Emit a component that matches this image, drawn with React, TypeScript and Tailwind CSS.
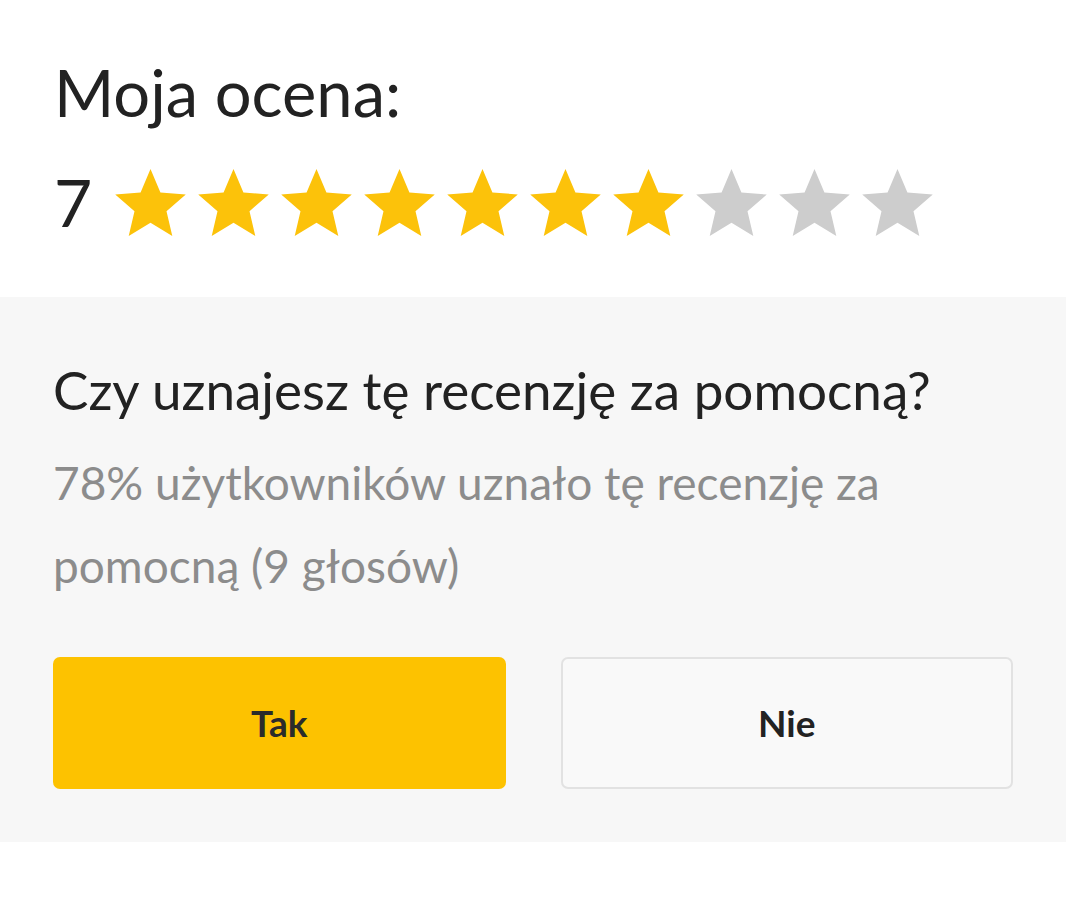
import React from 'react';

const font = { fontFamily: 'Lato, "Noto Sans", sans-serif' };

function Star({ filled }: { filled: boolean }) {
  return (
    <svg
      viewBox="2 2 20 19"
      width={71}
      height={67}
      className={filled ? 'text-[#fcc20a]' : 'text-[#cdcdcd]'}
      fill="currentColor"
    >
      <path d="M12 17.27L18.18 21l-1.64-7.03L22 9.24l-7.19-.61L12 2 9.19 8.63 2 9.24l5.46 4.73L5.82 21z" />
    </svg>
  );
}

export default function App() {
  const rating = 7;

  return (
    <div className="w-[1066px] min-h-[900px] bg-white" style={font}>
      {/* ocena */}
      <div className="px-[54px] pt-[53px] pb-[55px]">
        <h1 className="text-[65px] leading-[78px] text-[#222222] font-normal">Moja ocena:</h1>
        <div className="mt-[31px] flex items-center h-[80px]">
          <span className="text-[66px] leading-[80px] text-[#222222] w-[61px]">{rating}</span>
          <div className="flex gap-[12px]">
            {Array.from({ length: 10 }).map((_, i) => (
              <Star key={i} filled={i < rating} />
            ))}
          </div>
        </div>
      </div>

      {/* pomocna */}
      <div className="bg-[#f7f7f7] px-[53px] pt-[61px] pb-[53px]">
        <h2 className="text-[53px] leading-[64px] text-[#222222]">
          Czy uznajesz tę recenzję za pomocną?
        </h2>
        <p className="mt-[19px] text-[46px] leading-[83px] text-[#8c8c8c] pr-[100px]">
          78% użytkowników uznało tę recenzję za pomocną (9 głosów)
        </p>
        <div className="mt-[50px] grid grid-cols-2 gap-[55px]">
          <button className="h-[132px] rounded-[7px] bg-[#fdc200] text-[37px] font-bold text-[#2b2b2b]">
            Tak
          </button>
          <button className="h-[132px] rounded-[7px] border-2 border-[#e2e2e2] bg-[#f9f9f9] text-[37px] font-bold text-[#222222]">
            Nie
          </button>
        </div>
      </div>
    </div>
  );
}
